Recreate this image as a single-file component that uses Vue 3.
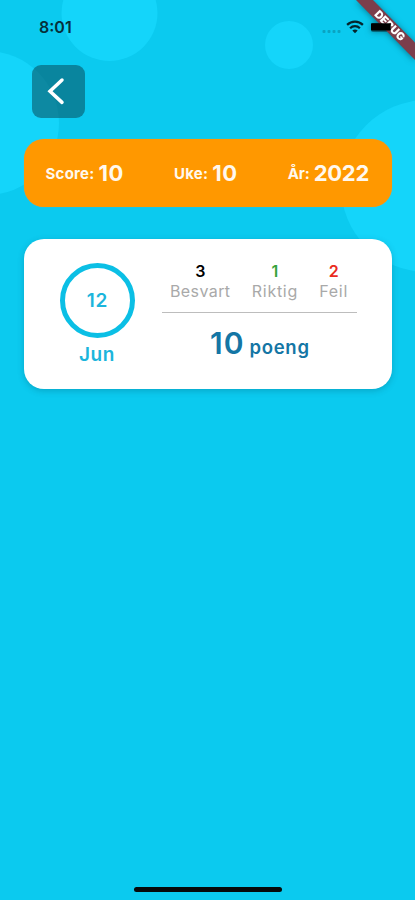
<script setup>
const summary = [
  { label: 'Score:', value: '10', key: 'score' },
  { label: 'Uke:', value: '10', key: 'week' },
  { label: 'År:', value: '2022', key: 'year' },
]
const stats = [
  { value: 3, label: 'Besvart', key: 'answered' },
  { value: 1, label: 'Riktig', key: 'correct' },
  { value: 2, label: 'Feil', key: 'wrong' },
]
</script>

<template>
  <div class="screen">
    <svg class="backdrop" viewBox="0 0 415 900" aria-hidden="true">
      <g fill="#14d5fa">
        <circle cx="109.5" cy="13" r="48" />
        <circle cx="-13" cy="123" r="72" />
        <circle cx="289" cy="45" r="24" />
        <circle cx="427" cy="186" r="86" />
      </g>
    </svg>

    <header class="status">
      <span class="time">8:01</span>
      <div class="indicators">
        <svg class="signal" width="20" height="6" viewBox="0 0 20 6">
          <g fill="#0aa3c1">
            <rect x="0.5" y="1" width="3" height="3" rx="1" />
            <rect x="5.5" y="1" width="3" height="3" rx="1" />
            <rect x="10.5" y="1" width="3" height="3" rx="1" />
            <rect x="15.5" y="1" width="3" height="3" rx="1" />
          </g>
        </svg>
        <svg class="wifi" width="18" height="14" viewBox="0 0 18 14">
          <g fill="none" stroke="#05252c" stroke-width="2.2">
            <path d="M1.1 4.9 A11.2 11.2 0 0 1 16.9 4.9" />
            <path d="M4.1 8.2 A7 7 0 0 1 13.9 8.2" />
          </g>
          <path d="M6.3 10.5 Q9 8.3 11.7 10.5 L9 13.2 Z" fill="#05252c" />
        </svg>
        <span class="battery"></span>
      </div>
    </header>

    <button class="back" aria-label="Tilbake">
      <svg width="53" height="53" viewBox="0 0 53 53">
        <path d="M30 15 L18 26.2 L30 37.4" fill="none" stroke="#fff" stroke-width="3.5" stroke-linecap="round" />
      </svg>
    </button>

    <section class="summary">
      <div v-for="item in summary" :key="item.key" class="summary-item" :class="item.key">
        <span class="summary-label">{{ item.label }}</span>
        <span class="summary-value">{{ item.value }}</span>
      </div>
    </section>

    <section class="card">
      <div class="date">
        <div class="day">12</div>
        <div class="month">Jun</div>
      </div>
      <div class="result">
        <div class="stats">
          <div v-for="s in stats" :key="s.key" class="stat" :class="s.key">
            <b>{{ s.value }}</b>
            <span>{{ s.label }}</span>
          </div>
        </div>
        <div class="points"><span class="number">10</span><span class="unit">poeng</span></div>
      </div>
    </section>

    <div class="home-bar"></div>

    <svg class="ribbon" width="75" height="75" viewBox="0 0 75 75">
      <path d="M16 0 H33 L75 42.5 V60 Z" fill="#7b3e4b" />
      <text x="50" y="29.5" transform="rotate(45 50 25.5)" text-anchor="middle" textLength="38" lengthAdjust="spacingAndGlyphs">DEBUG</text>
      <rect x="31" y="23.3" width="19.8" height="7.3" rx="0.8" fill="#000" />
    </svg>
  </div>
</template>

<style>
body {
  margin: 0;
}
</style>

<style scoped>
.screen {
  position: relative;
  box-sizing: border-box;
  width: 415px;
  height: 900px;
  overflow: hidden;
  padding: 0 23px 0 24px;
  display: flex;
  flex-direction: column;
  background: #0bcaef;
  font-family: Inter, 'Liberation Sans', sans-serif;
}
.backdrop {
  position: absolute;
  inset: 0;
  width: 415px;
  height: 900px;
}
.status,
.back,
.summary,
.card,
.home-bar {
  position: relative;
  flex: none;
}
.status {
  display: flex;
  justify-content: space-between;
  height: 65px;
  padding: 0 0 0 15px;
}
.time {
  margin-top: 17px;
  font-size: 16px;
  line-height: 20px;
  font-weight: 600;
  color: #06303a;
}
.indicators {
  display: flex;
  align-items: flex-start;
}
.signal {
  margin: 28.5px 4px 0 0;
}
.wifi {
  margin: 19.5px 7px 0 0;
}
.battery {
  width: 21px;
  height: 9.5px;
  margin-top: 22.5px;
  border-radius: 2px;
  background: #087e94;
}
.back {
  width: 53px;
  height: 53px;
  margin-left: 8px;
  padding: 0;
  border: 0;
  border-radius: 9px;
  background: rgba(8, 86, 103, 0.6);
}
.back svg {
  display: block;
}
.summary {
  box-sizing: border-box;
  height: 68px;
  margin-top: 21px;
  padding: 0 23px 0 21.5px;
  display: flex;
  justify-content: space-between;
  align-items: center;
  border-radius: 20px;
  background: #ff9800;
  box-shadow: 0 0 1px #b6a27b;
  color: #fff8ee;
}
.summary-item {
  display: flex;
  align-items: center;
  gap: 4px;
  font-weight: 700;
  white-space: nowrap;
}
.summary-label {
  font-size: 15px;
  letter-spacing: 0.25px;
}
.year .summary-label {
  letter-spacing: -0.1px;
}
.summary-value {
  font-size: 22px;
  letter-spacing: 0.5px;
  margin-right: -0.5px;
}
.year .summary-value {
  letter-spacing: -0.3px;
  margin-right: 0;
}
.card {
  box-sizing: border-box;
  height: 150px;
  margin-top: 32px;
  padding: 24px 35px 0 35px;
  display: flex;
  gap: 27px;
  border-radius: 20px;
  background: #fff;
  box-shadow: 0 2px 6px rgba(0, 80, 100, 0.28);
}
.date {
  width: 76px;
  display: flex;
  flex-direction: column;
  align-items: center;
  color: #1bb5dc;
  font-weight: 600;
}
.day {
  box-sizing: border-box;
  width: 75px;
  height: 75px;
  display: flex;
  align-items: center;
  justify-content: center;
  border: 5px solid #0bbfe5;
  border-radius: 50%;
  font-size: 19px;
  letter-spacing: 0.8px;
  text-indent: 0.8px;
}
.month {
  margin-top: 5px;
  font-size: 19px;
  line-height: 24px;
  letter-spacing: 0.6px;
}
.result {
  width: 195px;
}
.stats {
  box-sizing: border-box;
  height: 50px;
  padding: 0 9px 0 8px;
  display: flex;
  justify-content: space-between;
  border-bottom: 1.5px solid #bdbdbd;
}
.stat {
  display: flex;
  flex-direction: column;
  align-items: center;
  font-size: 16px;
  line-height: 20px;
  color: #a9a9a9;
}
.stat b {
  height: 18px;
  line-height: 16px;
  font-weight: 600;
}
.stat span {
  letter-spacing: 0.4px;
}
.stat.correct span {
  letter-spacing: 0.7px;
}
.stat.wrong span {
  letter-spacing: 0.7px;
}
.stat.answered b {
  color: #000;
}
.stat.correct b {
  color: #36a33b;
}
.stat.wrong b {
  color: #ea2b20;
}
.points {
  margin-top: 12px;
  display: flex;
  align-items: baseline;
  justify-content: center;
  gap: 5px;
  color: #1476a5;
  font-weight: 600;
}
.number {
  font-size: 30px;
  line-height: 36px;
  letter-spacing: 1px;
}
.unit {
  font-size: 18.5px;
  letter-spacing: 0.7px;
  margin-right: -0.7px;
}
.home-bar {
  width: 148px;
  height: 5px;
  margin: auto 0 8px 110px;
  border-radius: 3px;
  background: #06090a;
}
.ribbon {
  position: absolute;
  top: 0;
  right: 0;
  filter: drop-shadow(0 1px 3px rgba(0, 40, 50, 0.5));
}
.ribbon text {
  font: 900 11px Inter, sans-serif;
  fill: #fff;
}
</style>
